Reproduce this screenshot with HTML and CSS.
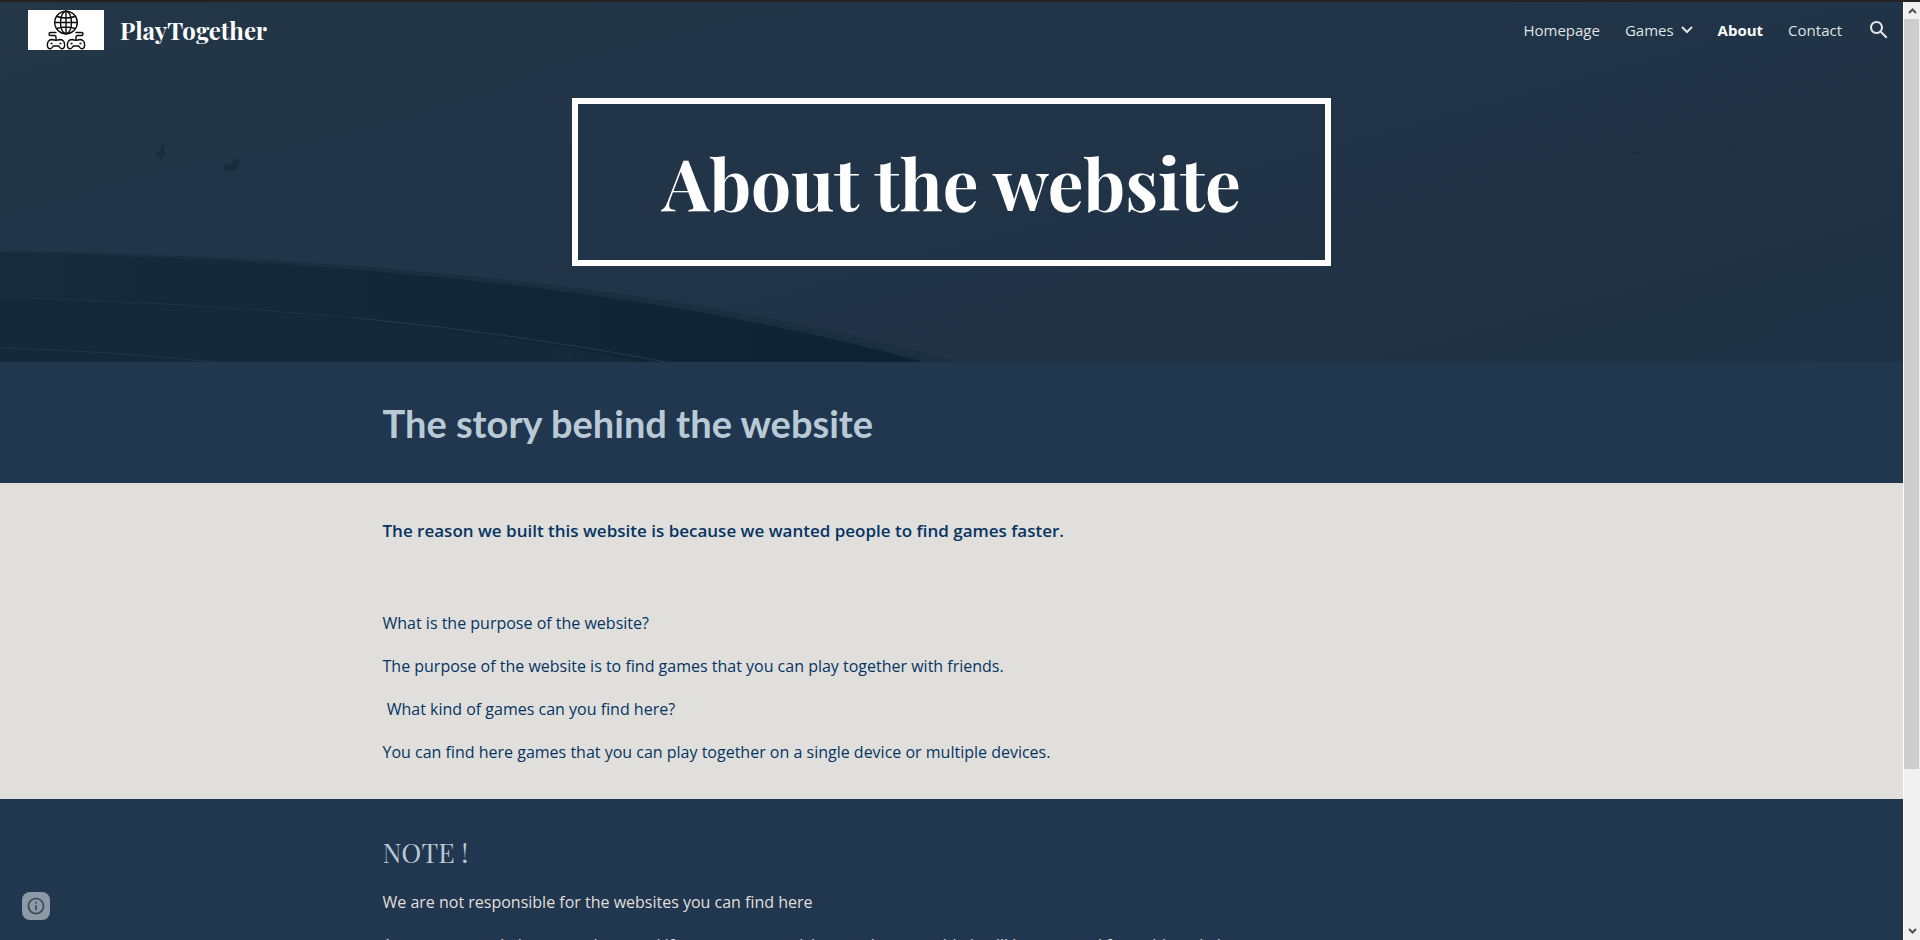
FILE: index.html
```html
<!DOCTYPE html>
<html lang="en">
<head>
<meta charset="utf-8">
<title>PlayTogether - About</title>
<link rel="stylesheet" href="styles.css">
</head>
<body>
<div class="window">
  <div class="page">
    <section class="hero">
      <svg class="hero-art" viewBox="0 0 1903 360" preserveAspectRatio="xMidYMid slice" aria-hidden="true">
        <defs>
          <linearGradient id="hill" x1="0" x2="1" y1="0" y2="0">
            <stop offset="0" stop-color="#172b3c"/>
            <stop offset="1" stop-color="#0f2233"/>
          </linearGradient>
        </defs>
        <path d="M0 249C300 253 660 277 957 360H0Z" fill="#1b2f40"/>
        <path d="M0 251C300 256 640 282 925 360H0Z" fill="url(#hill)"/>
        <path d="M0 297Q180 303 357 320T640 360H0Z" fill="#16293a"/>
        <g fill="none" stroke="#263c4d">
          <path d="M0 295Q180 300 357 316" opacity=".5"/>
          <path d="M357 316Q520 332 666 360"/>
          <path d="M0 346Q110 349 214 360" opacity=".7"/>
          <path d="M560 352v8m10-9v9m9-8v8" opacity=".5"/>
        </g>
        <g fill="#1a2d3d">
          <path d="M162 142l3 2-1 5 1 5-3 3-5-2-1-4 4-2z"/>
          <path d="M223 163l9-2 2-4 5 0 1 3-2 2 0 5-8 2-7-1z"/>
          <path d="M1631 150h8v3h-7zM1731 147l4-3v9l-2-4z" opacity=".7"/>
        </g>
      </svg>
      <header class="topbar">
        <a class="brand" href="#">
          <svg class="logo" viewBox="0 0 76 40" aria-hidden="true">
            <rect width="76" height="40" fill="#fff"/>
            <g fill="none" stroke="#0c0c0c" stroke-width="1.4" stroke-linecap="round" stroke-linejoin="round">
              <circle cx="38" cy="12.500" r="11.300"/>
              <ellipse cx="38" cy="12.500" rx="5.500" ry="11.300"/>
              <path d="M38 1v23M27 12.500h22M29 6.500q9 3 18 0M29 18.500q9-3 18 0"/>
              <path d="M28 22.500h-5.500a1.500 1.500 0 0 0 0 3h4q1.500 0 1.500 2v2M48 22.500h5.500a1.500 1.500 0 0 1 0 3h-4q-1.500 0-1.500 2v2"/>
              <path d="M24 29.500q4 1.500 8 0c3.500 0 4.800 3 4.600 6-.2 4-4 4-5.100 1.500q-.5-1-1.500-1h-4q-1 0-1.500 1c-1.100 2.500-4.900 2.500-5.100-1.500-.2-3 1.100-6 4.600-6z"/>
              <path d="M44 29.500q4 1.500 8 0c3.500 0 4.800 3 4.600 6-.2 4-4 4-5.100 1.500q-.5-1-1.500-1h-4q-1 0-1.500 1c-1.100 2.500-4.900 2.500-5.100-1.500-.2-3 1.100-6 4.600-6z"/>
              <path d="M23 33.500h1M32 33.500h1M43 33.500h1M52 33.500h1"/>
            </g>
          </svg>
          <span>PlayTogether</span>
        </a>
        <nav class="nav">
          <a href="#">Homepage</a>
          <a class="has-menu" href="#">Games
            <svg class="chevron" viewBox="0 0 12 8" aria-hidden="true"><path d="M1 1l5 5 5-5" fill="none" stroke="currentColor" stroke-width="2"/></svg>
          </a>
          <a class="current" href="#">About</a>
          <a href="#">Contact</a>
          <button class="search" type="button" aria-label="Search">
            <svg viewBox="0 0 24 24"><path fill="currentColor" d="M20.490 19l-5.730-5.730C15.530 12.200 16 10.910 16 9.500 16 5.910 13.090 3 9.500 3S3 5.910 3 9.500 5.910 16 9.500 16c1.410 0 2.700-.47 3.770-1.240L19 20.490 20.490 19zM5 9.500C5 7.010 7.010 5 9.500 5S14 7.010 14 9.500 11.990 14 9.500 14 5 11.990 5 9.500z"/></svg>
          </button>
        </nav>
      </header>
      <h1 class="title">About the website</h1>
    </section>

    <section class="band story">
      <div class="column"><h2>The story behind the website</h2></div>
    </section>

    <section class="band reasons">
      <div class="column">
        <h3>The reason we built this website is because we wanted people to find games faster.</h3>
        <p>What is the purpose of the website?</p>
        <p>The purpose of the website is to find games that you can play together with friends.</p>
        <p>&nbsp;What kind of games can you find here?</p>
        <p>You can find here games that you can play together on a single device or multiple devices.</p>
      </div>
    </section>

    <section class="band note">
      <div class="column">
        <h2>NOTE !</h2>
        <p>We are not responsible for the websites you can find here</p>
        <p>As soon as a website comes here and if we see any suspicious and untrustable it will be removed from this website</p>
      </div>
    </section>

    <button class="info" type="button" aria-label="Site information">
      <svg viewBox="0 0 24 24"><path fill="currentColor" d="M11 17h2v-6h-2v6zm1-15C6.480 2 2 6.480 2 12s4.480 10 10 10 10-4.480 10-10S17.520 2 12 2zm0 18c-4.410 0-8-3.590-8-8s3.590-8 8-8 8 3.590 8 8-3.590 8-8 8zM11 9h2V7h-2v2z"/></svg>
    </button>
  </div>

  <div class="scrollbar" aria-hidden="true">
    <svg class="arrow" viewBox="0 0 9 6"><path d="M1 5l3.500-3.500L8 5" fill="none" stroke="#505050" stroke-width="2"/></svg>
    <div class="track"><div class="thumb"></div></div>
    <svg class="arrow" viewBox="0 0 9 6"><path d="M1 1l3.500 3.500L8 1" fill="none" stroke="#505050" stroke-width="2"/></svg>
  </div>
</div>
</body>
</html>
```
FILE: styles.css
```css
* {
  box-sizing: border-box;
}

body {
  margin: 0;
  font-family: "Open Sans", sans-serif;
  font-size: 16px;
  line-height: 27px;
}

h1, h2, h3, p {
  margin: 0;
}

.window {
  display: flex;
  height: 100vh;
  overflow: hidden;
  border-top: 2px solid #222;
}

.page {
  position: relative;
  flex: 1;
  overflow: hidden;
  background: #21374f;
}

/* Hero with the header bar on top */
.hero {
  position: relative;
  display: flex;
  flex-direction: column;
  align-items: center;
  padding-bottom: 96px;
  background: linear-gradient(165deg, #233748 0%, #223448 45%, #203244 75%, #1f3245 100%);
}

.hero-art {
  position: absolute;
  inset: 0;
  width: 100%;
  height: 100%;
}

.topbar {
  position: relative;
  display: flex;
  align-items: center;
  justify-content: space-between;
  align-self: stretch;
  height: 56px;
  padding: 0 12px 0 28px;
}

.brand {
  display: flex;
  align-items: center;
  gap: 16px;
  color: #fff;
  font-family: "Playfair Display", "Liberation Serif", serif;
  font-size: 24px;
  font-weight: 700;
  text-decoration: none;
}

.logo {
  width: 76px;
  height: 40px;
}

.nav {
  display: flex;
  align-items: center;
  gap: 25px;
  font-size: 15px;
}

.nav a {
  color: #dfe3e6;
  text-decoration: none;
}

.nav .current {
  color: #fff;
  font-weight: 700;
}

.nav .has-menu {
  display: flex;
  align-items: center;
  gap: 7px;
}

.chevron {
  width: 12px;
  height: 8px;
}

.search,
.info {
  display: flex;
  align-items: center;
  justify-content: center;
  padding: 0;
  border: 0;
}

.search {
  width: 24px;
  height: 24px;
  background: none;
  color: #dfe3e6;
}

.search svg {
  width: 24px;
  height: 24px;
}

.title {
  position: relative;
  margin-top: 40px;
  padding: 32px 84px;
  border: 6px solid #fff;
  color: #fff;
  font-family: "Playfair Display", "Liberation Serif", serif;
  font-size: 71px;
  font-weight: 700;
  line-height: 92px;
}

/* Content bands */
.column {
  width: 60%;
  min-width: 720px;
  max-width: 1138px;
  margin: 0 auto;
}

.story {
  padding: 37px 0 36px;
  color: #b9cad6;
}

.story h2 {
  font-family: Lato, sans-serif;
  font-size: 38px;
  font-weight: 700;
  line-height: 48px;
}

.reasons {
  padding: 34px 0 33px;
  background: #e0dfdb;
  color: #063464;
}

.reasons h3 {
  margin-bottom: 66px;
  font-size: 17px;
  font-weight: 600;
}

.column p + p {
  margin-top: 16px;
}

.note {
  padding: 35px 0;
  color: #e0dfdb;
}

.note h2 {
  margin-bottom: 19px;
  color: #b9cad6;
  font-family: "Playfair Display", "Liberation Serif", serif;
  font-size: 27px;
  font-weight: 400;
  line-height: 36px;
}

.info {
  position: absolute;
  left: 22px;
  bottom: 20px;
  width: 28px;
  height: 28px;
  border-radius: 8px;
  background: #8c99a6;
  color: #3d474f;
}

.info svg {
  width: 20px;
  height: 20px;
}

/* Scrollbar */
.scrollbar {
  display: flex;
  flex-direction: column;
  align-items: center;
  width: 17px;
  padding: 6px 0;
  border-left: 1px solid #fff;
  background: #f0f0f0;
}

.arrow {
  width: 9px;
  height: 6px;
}

.track {
  flex: 1;
  align-self: stretch;
  margin: 5px 1px 5px 0;
}

.thumb {
  height: 83%;
  background: #cdcdcd;
}
```
